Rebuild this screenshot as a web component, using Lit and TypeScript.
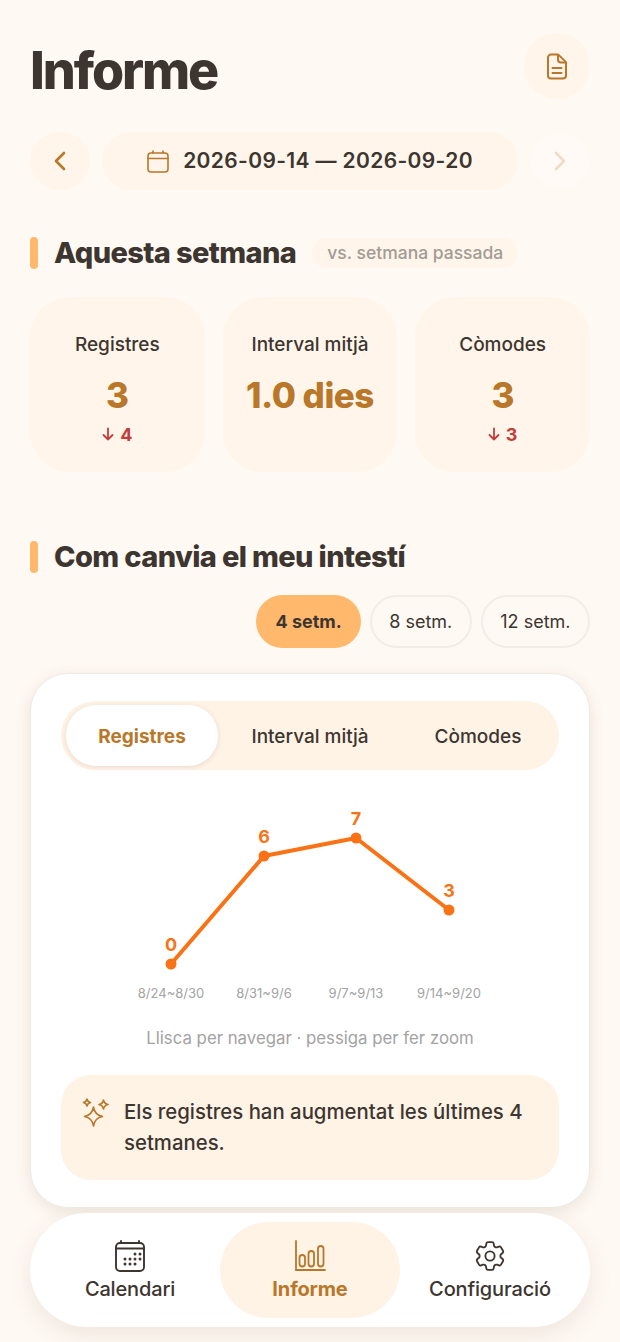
import { LitElement, html, css, svg } from "lit";
import { customElement } from "lit/decorators.js";

const points = [
  { x: 171, y: 964, value: 0, week: "8/24~8/30" },
  { x: 264, y: 856, value: 6, week: "8/31~9/6" },
  { x: 356, y: 838, value: 7, week: "9/7~9/13" },
  { x: 449, y: 910, value: 3, week: "9/14~9/20" },
];

const stats = [
  { label: "Registres", value: "3", delta: "4" },
  { label: "Interval mitjà", value: "1.0 dies", delta: "" },
  { label: "Còmodes", value: "3", delta: "3" },
];

const gearPath =
  "M9.594 3.94c.09-.542.56-.94 1.11-.94h2.593c.55 0 1.02.398 1.11.94l.213 1.281c.063.374.313.686.645.87.074.04.147.083.22.127.325.196.72.257 1.075.124l1.217-.456a1.125 1.125 0 0 1 1.37.49l1.296 2.247a1.125 1.125 0 0 1-.26 1.431l-1.003.827c-.293.241-.438.613-.43.992a7.723 7.723 0 0 1 0 .255c-.008.378.137.75.43.991l1.004.827c.424.35.534.955.26 1.43l-1.298 2.247a1.125 1.125 0 0 1-1.369.491l-1.217-.456c-.355-.133-.75-.072-1.076.124a6.47 6.47 0 0 1-.22.128c-.331.183-.581.495-.644.869l-.213 1.281c-.09.543-.56.94-1.11.94h-2.594c-.55 0-1.019-.398-1.11-.94l-.213-1.281c-.062-.374-.312-.686-.644-.87a6.52 6.52 0 0 1-.22-.127c-.325-.196-.72-.257-1.076-.124l-1.217.456a1.125 1.125 0 0 1-1.369-.49l-1.297-2.247a1.125 1.125 0 0 1 .26-1.431l1.004-.827c.292-.24.437-.613.43-.991a6.932 6.932 0 0 1 0-.255c.007-.38-.138-.751-.43-.992l-1.004-.827a1.125 1.125 0 0 1-.26-1.43l1.297-2.247a1.125 1.125 0 0 1 1.37-.491l1.216.456c.356.133.751.072 1.076-.124.072-.044.146-.086.22-.128.332-.183.582-.495.644-.869l.214-1.28Z";

// dots of the calendar tab icon, as [x, y] in the 30x32 viewBox
const calendarDots = [
  [20, 14], [25, 14],
  [10, 19], [15, 19], [20, 19], [25, 19],
  [10, 24], [15, 24], [20, 24],
];

@customElement("app-root")
export class AppRoot extends LitElement {
  static styles = css`
    :host {
      display: block;
      min-height: 1342px;
      background: #fff9f3;
      color: #3d3530;
      font-family: Inter, "Liberation Sans", sans-serif;
    }

    .page {
      display: flex;
      flex-direction: column;
      padding: 33px 30px 15px;
    }

    svg {
      display: block;
      fill: none;
    }

    .header {
      display: flex;
      align-items: center;
      justify-content: space-between;
    }

    h1 {
      margin: 10px 0 0;
      font-size: 52px;
      line-height: 56px;
      font-weight: 800;
      letter-spacing: -2.1px;
    }

    .round {
      display: flex;
      align-items: center;
      justify-content: center;
      border-radius: 50%;
      background: #fff5ea;
      flex: none;
    }

    .report {
      width: 66px;
      height: 66px;
    }

    .range {
      display: flex;
      gap: 12px;
      height: 58px;
      margin-top: 33px;
    }

    .range .round {
      width: 60px;
      height: 58px;
    }

    .range .round.off {
      background: #fffaf5;
    }

    .dates {
      flex: 1;
      display: flex;
      align-items: center;
      justify-content: center;
      gap: 14px;
      border-radius: 29px;
      background: #fff5ea;
      font-size: 21px;
      font-weight: 600;
      letter-spacing: 0.36px;
    }

    .dates span {
      padding-bottom: 2px;
    }

    .section {
      display: flex;
      align-items: center;
      height: 32px;
    }

    .section.first {
      margin-top: 47px;
    }

    .section.second {
      margin-top: 69px;
    }

    .bar {
      width: 8px;
      height: 32px;
      border-radius: 4px;
      background: #ffb86c;
      margin-right: 16px;
    }

    h2 {
      margin: 0;
      font-size: 29px;
      line-height: 32px;
      font-weight: 800;
      letter-spacing: -0.62px;
    }

    .compare {
      margin-left: 16px;
      padding: 0 15px;
      height: 30px;
      line-height: 30px;
      border-radius: 15px;
      background: #fff5ea;
      color: #a29c95;
      font-size: 17.5px;
      font-weight: 500;
    }

    .stats {
      display: grid;
      grid-template-columns: repeat(3, 1fr);
      gap: 18px;
      margin-top: 28px;
    }

    .stat {
      height: 175px;
      box-sizing: border-box;
      padding-top: 36px;
      border-radius: 40px;
      background: #fff5ea;
      text-align: center;
    }

    .stat .label {
      font-size: 19px;
      line-height: 24px;
      font-weight: 500;
    }

    .stat .value {
      margin-top: 16px;
      font-size: 35px;
      line-height: 44px;
      font-weight: 800;
      letter-spacing: -0.5px;
      color: #b87729;
    }

    .stat .delta {
      display: flex;
      align-items: center;
      justify-content: center;
      gap: 6px;
      height: 24px;
      margin-top: 5px;
      font-size: 18px;
      font-weight: 700;
      color: #c23d3d;
    }

    .periods {
      display: flex;
      justify-content: flex-end;
      gap: 9px;
      margin-top: 22px;
    }

    .period {
      height: 53px;
      box-sizing: border-box;
      display: flex;
      align-items: center;
      padding: 0 17.5px;
      border: 2px solid #f1ede7;
      border-radius: 27px;
      font-size: 18px;
    }

    .period.on {
      padding: 0 19px;
      border: 0;
      background: #ffb86c;
      font-weight: 700;
    }

    .card {
      margin-top: 25px;
      padding: 27px 30px 27px;
      border: 1px solid #eeeae5;
      border-radius: 38px;
      background: #fff;
      box-shadow: 0 4px 16px rgba(90, 70, 50, 0.12);
    }

    .tabs {
      display: flex;
      gap: 16px;
      height: 69px;
      box-sizing: border-box;
      padding: 4px 5px;
      border-radius: 34px;
      background: #fff3e6;
    }

    .tab {
      flex: 1;
      display: flex;
      align-items: center;
      justify-content: center;
      padding-top: 1px;
      border-radius: 30px;
      font-size: 19px;
      font-weight: 500;
    }

    .tab.on {
      background: #fff;
      color: #b87729;
      font-weight: 700;
      box-shadow: 0 1px 5px rgba(120, 90, 50, 0.16);
    }

    .chart {
      margin-top: 20px;
    }

    .chart text {
      font-family: Inter, "Liberation Sans", sans-serif;
      text-anchor: middle;
    }

    .chart .num {
      fill: #f97316;
      font-size: 18px;
      font-weight: 700;
    }

    .chart .week {
      fill: #a3a3a3;
      font-size: 13px;
    }

    .hint {
      margin-top: 20px;
      text-align: center;
      color: #a3a3a3;
      font-size: 16.8px;
      line-height: 26px;
    }

    .insight {
      display: flex;
      gap: 14px;
      margin-top: 24px;
      height: 105px;
      box-sizing: border-box;
      padding: 21px 20px 0 19px;
      border-radius: 30px;
      background: #fff3e6;
      font-size: 20.35px;
      line-height: 31px;
      font-weight: 500;
    }

    .insight svg {
      flex: none;
      margin-top: 2px;
    }

    .nav {
      display: flex;
      height: 114px;
      box-sizing: border-box;
      margin-top: 5px;
      padding: 9px 10px;
      border-radius: 57px;
      background: #fff;
      box-shadow: 0 8px 24px rgba(90, 70, 50, 0.1);
      position: relative;
    }

    .item {
      flex: 1;
      display: flex;
      flex-direction: column;
      align-items: center;
      gap: 2px;
      padding-top: 18px;
      border-radius: 48px;
      font-size: 20px;
      line-height: 30px;
      font-weight: 500;
      letter-spacing: -0.15px;
    }

    .item.on {
      background: #fff3e6;
      color: #b87729;
      font-weight: 700;
    }
  `;

  private chart() {
    const line = points.map((p) => `${p.x},${p.y}`).join(" ");
    return html`
      <svg class="chart" width="497" height="215" viewBox="61 790 497 215">
        <polyline points=${line} stroke="#f97316" stroke-width="4" stroke-linejoin="round"></polyline>
        ${points.map(
          (p) => svg`
            <circle cx=${p.x} cy=${p.y} r="5.5" fill="#f97316"></circle>
            <text class="num" x=${p.x} y=${p.y - 13}>${p.value}</text>
            <text class="week" x=${p.x} y="998">${p.week}</text>
          `
        )}
      </svg>
    `;
  }

  render() {
    return html`
      <div class="page">
        <div class="header">
          <h1>Informe</h1>
          <div class="round report">
            <svg width="22" height="27" viewBox="0 0 22 27" stroke="#b87729" stroke-width="2" stroke-linejoin="round" stroke-linecap="round">
              <path d="M5 1.5h6.5a2 2 0 0 1 1.4.6l6.5 6.5a2 2 0 0 1 .6 1.4V22.5a3 3 0 0 1-3 3H5a3 3 0 0 1-3-3v-18a3 3 0 0 1 3-3Z"></path>
              <path d="M12 2v4.5a3 3 0 0 0 3 3h5"></path>
              <path d="M6.5 15h9M6.5 20h9"></path>
            </svg>
          </div>
        </div>

        <div class="range">
          <div class="round">
            <svg width="14" height="22" viewBox="0 0 14 22" stroke="#b87729" stroke-width="2.6" stroke-linecap="round" stroke-linejoin="round">
              <path d="M11 3 3 11l8 8"></path>
            </svg>
          </div>
          <div class="dates">
            <svg width="22" height="23" viewBox="0 0 22 23" stroke="#b87729" stroke-width="1.6" stroke-linecap="round">
              <rect x="1" y="3" width="20" height="19" rx="3"></rect>
              <path d="M1 8.5h20M6 1v2M16 1v2"></path>
            </svg>
            <span>2026-09-14 — 2026-09-20</span>
          </div>
          <div class="round off">
            <svg width="14" height="22" viewBox="0 0 14 22" stroke="#eedcc6" stroke-width="2.6" stroke-linecap="round" stroke-linejoin="round">
              <path d="m3 3 8 8-8 8"></path>
            </svg>
          </div>
        </div>

        <div class="section first">
          <div class="bar"></div>
          <h2>Aquesta setmana</h2>
          <div class="compare">vs. setmana passada</div>
        </div>

        <div class="stats">
          ${stats.map(
            (s) => html`
              <div class="stat">
                <div class="label">${s.label}</div>
                <div class="value">${s.value}</div>
                ${s.delta
                  ? html`<div class="delta">
                      <svg width="12" height="14" viewBox="0 0 12 14" stroke="#c23d3d" stroke-width="1.8" stroke-linecap="round" stroke-linejoin="round">
                        <path d="M6 1.5v11M1.5 8 6 12.5 10.5 8"></path>
                      </svg>
                      <span>${s.delta}</span>
                    </div>`
                  : ""}
              </div>
            `
          )}
        </div>

        <div class="section second">
          <div class="bar"></div>
          <h2>Com canvia el meu intestí</h2>
        </div>

        <div class="periods">
          <div class="period on">4 setm.</div>
          <div class="period">8 setm.</div>
          <div class="period">12 setm.</div>
        </div>

        <div class="card">
          <div class="tabs">
            <div class="tab on">Registres</div>
            <div class="tab">Interval mitjà</div>
            <div class="tab">Còmodes</div>
          </div>
          ${this.chart()}
          <div class="hint">Llisca per navegar · pessiga per fer zoom</div>
          <div class="insight">
            <svg width="30" height="36" viewBox="0 0 30 36" stroke="#b87729" stroke-width="1.6" stroke-linejoin="round">
              <path d="M13.500 9.500c1 5.500 3.500 8 9 9-5.500 1-8 3.500-9 9.500-1-6-3.500-8.500-9-9.500 5.500-1 8-3.500 9-9.500Z"></path>
              <path d="M7 1c.5 2.200 1.300 3 3.500 3.500C8.300 5 7.500 5.800 7 8 6.500 5.800 5.700 5 3.500 4.500 5.700 4 6.500 3.200 7 1Z"></path>
              <path d="M23.500 2c.6 2.800 1.700 3.900 4.500 4.500-2.800.6-3.900 1.700-4.500 4.500-.6-2.800-1.700-3.900-4.500-4.500 2.800-.6 3.900-1.700 4.500-4.500Z"></path>
            </svg>
            <div>Els registres han augmentat les últimes 4 setmanes.</div>
          </div>
        </div>

        <div class="nav">
          <div class="item">
            <svg width="30" height="32" viewBox="0 0 30 32" stroke="#3d3530" stroke-width="1.9" stroke-linecap="round">
              <rect x="1" y="3" width="28" height="28" rx="4"></rect>
              <path d="M1 8.500h28M6 1v2M24 1v2"></path>
              ${calendarDots.map(
                ([x, y]) => svg`<circle cx=${x} cy=${y} r="1.500" fill="#3d3530" stroke="none"></circle>`
              )}
            </svg>
            <span>Calendari</span>
          </div>
          <div class="item on">
            <svg width="32" height="32" viewBox="0 0 32 32" stroke="#b87729" stroke-width="1.800" stroke-linecap="round">
              <path d="M2 1v29h29"></path>
              <rect x="5.500" y="15" width="5.500" height="11.500" rx="2.700"></rect>
              <rect x="14.500" y="11" width="5.500" height="15.500" rx="2.700"></rect>
              <rect x="24" y="6" width="5.500" height="20.500" rx="2.700"></rect>
            </svg>
            <span>Informe</span>
          </div>
          <div class="item">
            <svg width="32" height="32" viewBox="1.600 1.600 20.800 20.800" stroke="#3d3530" stroke-width="1.200" stroke-linecap="round" stroke-linejoin="round">
              <path d=${gearPath}></path>
              <path d="M15 12a3 3 0 1 1-6 0 3 3 0 0 1 6 0Z"></path>
            </svg>
            <span>Configuració</span>
          </div>
        </div>
      </div>
    `;
  }
}
